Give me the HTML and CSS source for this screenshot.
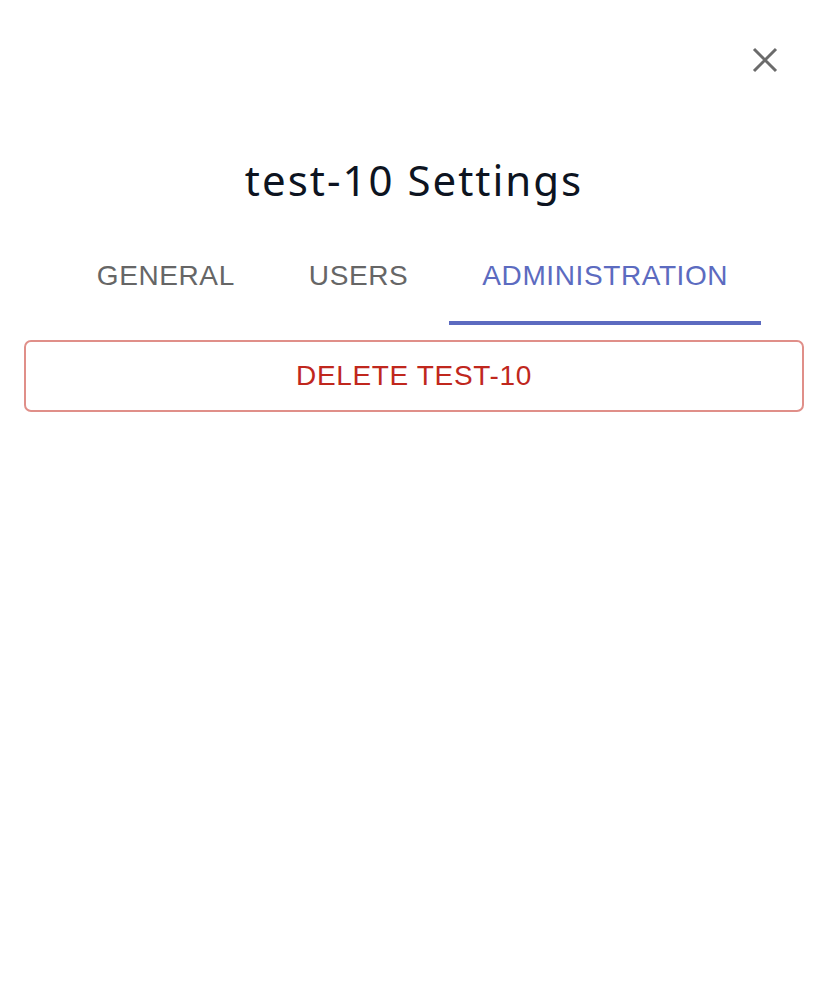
FILE: index.html
```html
<!DOCTYPE html>
<html lang="en">
  <head>
    <meta charset="UTF-8" />
    <meta name="viewport" content="width=device-width, initial-scale=1.0" />
    <title>test-10 Settings</title>
    <link rel="stylesheet" href="styles.css">
  </head>
  <body>
    <div class="dialog">
      <div class="dialog-top">
        <button class="close-btn" aria-label="Close">
          <svg width="26" height="26" viewBox="0 0 26 26">
            <path d="M2 2 L24 24 M24 2 L2 24" stroke="#6b6b6b" stroke-width="3" fill="none" />
          </svg>
        </button>
      </div>

      <h1 class="title">test-10 Settings</h1>

      <div class="tabs">
        <div class="tab">GENERAL</div>
        <div class="tab">USERS</div>
        <div class="tab active">ADMINISTRATION</div>
      </div>

      <div class="content">
        <button class="delete-btn">DELETE TEST-10</button>
      </div>
    </div>
  </body>
</html>
```

FILE: styles.css
```css
body {
  margin: 0;
  padding: 0;
  background-color: #ffffff;
  font-family: "Liberation Sans", Arial, sans-serif;
}
.dialog {
  width: 826px;
  height: 994px;
  box-sizing: border-box;
  padding: 0 22px 0 24px;
}
.dialog-top {
  display: flex;
  justify-content: flex-end;
  padding-top: 47px;
  padding-right: 26px;
}
.close-btn {
  background: none;
  border: none;
  padding: 0;
  width: 26px;
  height: 26px;
  cursor: pointer;
}
.close-btn svg {
  display: block;
}
.title {
  margin: 81px 0 0 0;
  text-align: center;
  font-family: "Noto Sans", sans-serif;
  font-weight: 400;
  font-size: 42px;
  line-height: 52px;
  letter-spacing: 2px;
  color: #0d1421;
}
.tabs {
  display: flex;
  justify-content: center;
  gap: 8px;
  margin-top: 31px;
  padding-right: 3px;
}
.tab {
  padding: 23px 33px 0;
  height: 88px;
  box-sizing: border-box;
  font-size: 28px;
  line-height: 32px;
  letter-spacing: 0.6px;
  color: #666666;
  border-bottom: 4px solid transparent;
  cursor: pointer;
}
.tab.active {
  color: #5c6bc0;
  border-bottom-color: #5c6bc0;
}
.content {
  padding-top: 15px;
}
.delete-btn {
  display: block;
  width: 100%;
  height: 72px;
  background: #ffffff;
  border: 2px solid #e08f89;
  border-radius: 7px;
  font-family: "Liberation Sans", Arial, sans-serif;
  font-size: 28px;
  letter-spacing: 0.65px;
  color: #c0271d;
  cursor: pointer;
}
```
